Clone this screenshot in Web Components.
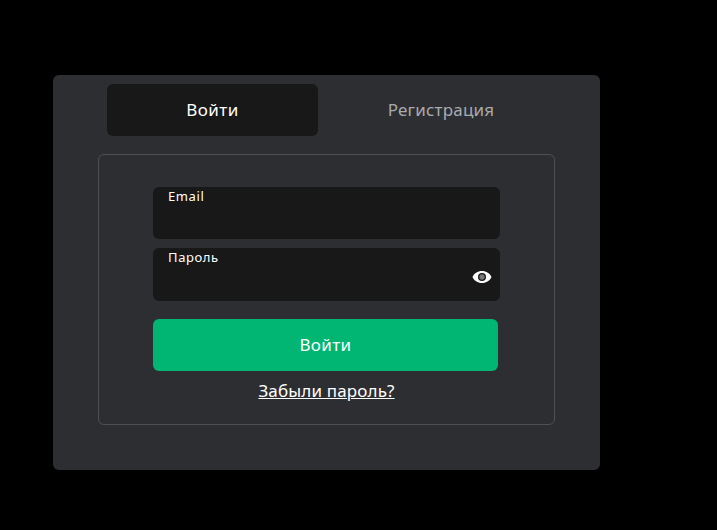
<!DOCTYPE html>
<html lang="ru">
<head>
<meta charset="utf-8">
<title>Вход</title>
<style>
    html, body { margin: 0; height: 100%; background: #000; overflow: hidden; }
    body { font-family: "Noto Sans", "Open Sans", sans-serif; color: #fff; }
</style>
</head>
<body>
<auth-card>
    <auth-tab slot="tabs" active>Войти</auth-tab>
    <auth-tab slot="tabs">Регистрация</auth-tab>
    <auth-field label="Email"></auth-field>
    <auth-field label="Пароль" password></auth-field>
    <auth-button>Войти</auth-button>
    <auth-link>Забыли пароль?</auth-link>
</auth-card>
<script>
/**
 * AuthCard - dark card with the tab row and the bordered form box
 */
class AuthCard extends HTMLElement {
    constructor() {
        super();
        this.attachShadow({ mode: 'open' });
    }

    connectedCallback() {
        this.shadowRoot.innerHTML = `
            <style>
                :host {
                    display: block;
                    box-sizing: border-box;
                    width: 547px;
                    height: 395px;
                    margin: 75px 0 0 53px;
                    padding: 9px 45px 0;
                    background: #2d2e32;
                    border-radius: 6px;
                }
                .tabs {
                    display: grid;
                    grid-template-columns: 211px 228px;
                    gap: 9px;
                    margin: 0 0 18px 9px;
                }
                .box {
                    box-sizing: border-box;
                    width: 457px;
                    height: 271px;
                    padding: 32px 54px 0;
                    border: 1px solid #4f5054;
                    border-radius: 6px;
                    display: flex;
                    flex-direction: column;
                }
            </style>
            <div class="tabs"><slot name="tabs"></slot></div>
            <div class="box"><slot></slot></div>
        `;
    }
}

/**
 * AuthTab - one tab, the active one gets the dark background
 */
class AuthTab extends HTMLElement {
    constructor() {
        super();
        this.attachShadow({ mode: 'open' });
    }

    connectedCallback() {
        this.shadowRoot.innerHTML = `
            <style>
                :host {
                    display: flex;
                    align-items: center;
                    justify-content: center;
                    height: 52px;
                    padding-bottom: 2px;
                    box-sizing: border-box;
                    border-radius: 6px;
                    font-size: 17px;
                    letter-spacing: .2px;
                    color: #a9aaac;
                }
                :host([active]) {
                    background: #181818;
                    color: #fff;
                    letter-spacing: .5px;
                }
            </style>
            <slot></slot>
        `;
    }
}

/**
 * AuthField - dark input with a small label inside, eye icon for passwords
 */
class AuthField extends HTMLElement {
    constructor() {
        super();
        this.attachShadow({ mode: 'open' });
    }

    connectedCallback() {
        const label = this.getAttribute('label');
        const eye = this.hasAttribute('password') ? `
            <svg class="eye" width="20" height="14" viewBox="0 0 20 14">
                <path fill="#fff" fill-rule="evenodd" d="M10 1C5.600 1 2 3.500.5 7 2 10.500 5.600 13 10 13s8-2.500 9.500-6C18 3.500 14.400 1 10 1zm0 2a4 4 0 1 1 0 8 4 4 0 0 1 0-8z"/>
                <circle cx="10" cy="7" r="2.700" fill="#777"/>
            </svg>` : '';
        this.shadowRoot.innerHTML = `
            <style>
                :host {
                    display: block;
                    position: relative;
                    box-sizing: border-box;
                    width: 347px;
                    height: 52px;
                    margin-bottom: 9px;
                    padding: 1px 15px 0;
                    background: #181818;
                    border-radius: 6px;
                    font-size: 13px;
                    letter-spacing: .6px;
                    line-height: 16px;
                    color: #fff;
                }
                :host([password]) {
                    height: 53px;
                    margin-bottom: 18px;
                }
                .eye {
                    position: absolute;
                    right: 8px;
                    top: 22px;
                }
            </style>
            <span>${label}</span>${eye}
        `;
    }
}

/**
 * AuthButton - green submit button
 */
class AuthButton extends HTMLElement {
    constructor() {
        super();
        this.attachShadow({ mode: 'open' });
    }

    connectedCallback() {
        this.shadowRoot.innerHTML = `
            <style>
                :host {
                    display: flex;
                    align-items: center;
                    justify-content: center;
                    box-sizing: border-box;
                    width: 345px;
                    height: 52px;
                    padding-bottom: 2px;
                    background: #00b672;
                    border-radius: 6px;
                    font-size: 17px;
                    letter-spacing: .4px;
                    color: #fff;
                }
            </style>
            <slot></slot>
        `;
    }
}

/**
 * AuthLink - underlined link below the button
 */
class AuthLink extends HTMLElement {
    constructor() {
        super();
        this.attachShadow({ mode: 'open' });
    }

    connectedCallback() {
        this.shadowRoot.innerHTML = `
            <style>
                :host {
                    display: block;
                    width: 347px;
                    margin-top: 9px;
                    text-align: center;
                    font-size: 17px;
                    letter-spacing: .15px;
                    line-height: 22px;
                    color: #fff;
                    text-decoration: underline;
                }
            </style>
            <slot></slot>
        `;
    }
}

customElements.define('auth-card', AuthCard);
customElements.define('auth-tab', AuthTab);
customElements.define('auth-field', AuthField);
customElements.define('auth-button', AuthButton);
customElements.define('auth-link', AuthLink);
</script>
</body>
</html>
